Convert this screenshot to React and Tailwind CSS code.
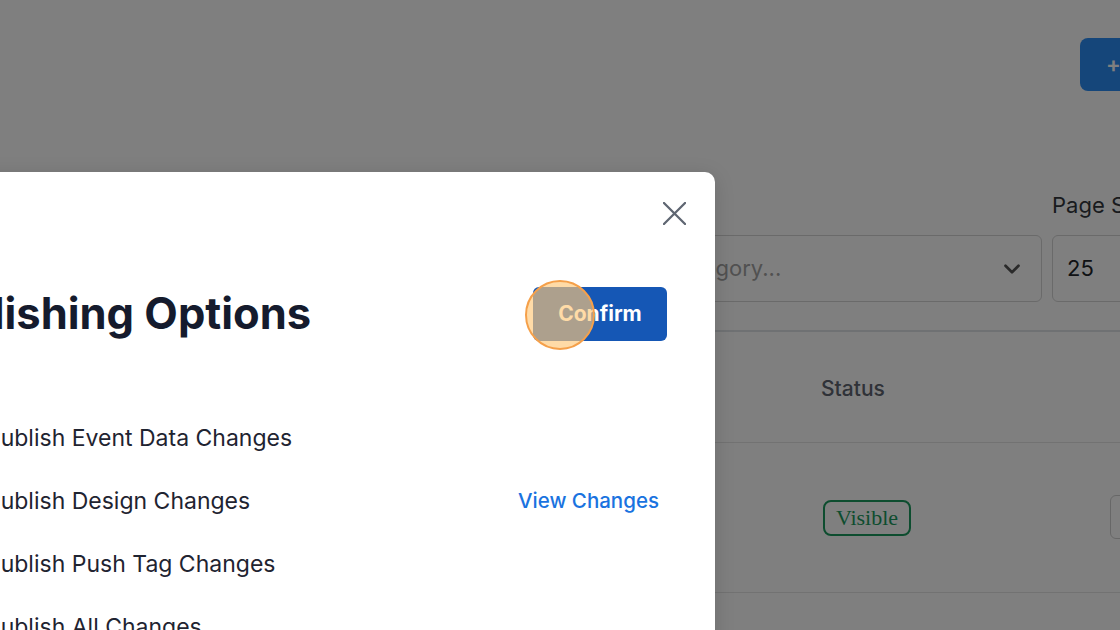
import { ChevronDown } from "lucide-react";

const ITEMS = [
  { label: "Publish Event Data Changes" },
  { label: "Publish Design Changes", link: "View Changes" },
  { label: "Publish Push Tag Changes" },
  { label: "Publish All Changes" },
];

function PageBehind() {
  return (
    <div className="flex flex-col">
      <div className="flex justify-end pt-[38px]">
        <button className="-mr-[120px] flex h-[53px] w-[160px] items-center gap-2 rounded-[8px] bg-[#2a8cf5] pl-[26px] text-[22px] font-semibold text-white">
          <span>+</span>
          <span>Add Event</span>
        </button>
      </div>

      <div className="mt-[99px] flex gap-[10px] pl-[560px]">
        <div className="flex w-[482px] shrink-0 flex-col">
          <div className="mb-[15px] text-[22px] leading-[30px] text-[#33373d]">Category</div>
          <div className="flex h-[67px] items-center justify-between rounded-[6px] border border-[#d4d4d4] pl-[20px] pr-[16px]">
            <span className="text-[22px] text-[#a3a3a3]">Select a category...</span>
            <ChevronDown className="h-[26px] w-[26px] text-[#555]" strokeWidth={2.5} />
          </div>
        </div>
        <div className="flex w-[200px] shrink-0 flex-col">
          <div className="mb-[15px] text-[22px] leading-[30px] text-[#33373d]">Page Size</div>
          <div className="flex h-[67px] items-center rounded-[6px] border border-[#d4d4d4] px-[14px]">
            <span className="text-[22px] text-[#212529]">25</span>
          </div>
        </div>
      </div>

      <div className="mt-[28px] w-[1400px] border-t-2 border-[#dee2e6]">
        <div className="grid h-[111px] grid-cols-[809px_289px_300px] items-center border-b border-[#e5e5e5] pt-[4px]">
          <div className="px-3 text-[21px] font-medium text-[#5f6570]">Event</div>
          <div className="px-3 text-[21px] font-medium text-[#5f6570]">Status</div>
          <div />
        </div>
        <div className="grid h-[150px] grid-cols-[809px_289px_300px] items-center border-b border-[#e5e5e5]">
          <div className="px-3 text-[21px]">Event</div>
          <div className="pl-[14px]">
            <span className="inline-flex h-[36px] w-[88px] items-center justify-center rounded-[8px] border-2 border-[#1b9a5e] font-['Liberation_Serif',serif] text-[22px] text-[#1b9a5e]">
              Visible
            </span>
          </div>
          <div className="pl-[12px] pt-[4px]">
            <span className="inline-flex h-[44px] w-[90px] items-center justify-center rounded-[6px] border border-[#cfcfcf]" />
          </div>
        </div>
      </div>
    </div>
  );
}

function PublishModal() {
  return (
    <div className="absolute left-[-300px] top-[172px] h-[600px] w-[1015px] rounded-[10px] bg-white shadow-[0_4px_20px_rgba(0,0,0,0.15)]">
      <button className="absolute right-[29px] top-[30px] h-[23px] w-[23px] text-[#5f6672]">
        <svg viewBox="0 0 24 24" className="h-full w-full" fill="none" stroke="currentColor" strokeWidth="2.4" strokeLinecap="round">
          <path d="M1 1 L23 23 M23 1 L1 23" />
        </svg>
      </button>

      <div className="mt-[115px] flex h-[54px] items-center justify-between pl-[210px] pr-[48px]">
        <h2 className="text-[43.5px] font-bold leading-none text-[#151b2d]">Publishing Options</h2>
        <div className="relative">
          <button className="h-[54px] w-[134px] rounded-[6px] bg-[#1557b5] text-[21px] font-bold text-white">Confirm</button>
          <span className="pointer-events-none absolute left-[-8px] top-[-7px] h-[70px] w-[70px] rounded-full border-2 border-[#f5a04a] bg-[rgba(255,200,120,0.65)]" />
        </div>
      </div>

      <div className="mt-[66px] flex flex-col pl-[226px] pr-[56px]">
        {ITEMS.map((it) => (
          <div key={it.label} className="flex h-[63px] items-center justify-between">
            <label className="flex items-center">
              <input type="checkbox" className="mr-[40px] h-[20px] w-[20px]" />
              <span className="text-[23px] text-[#1f2431]">{it.label}</span>
            </label>
            {it.link && <a className="text-[20.5px] font-medium text-[#1a73e0]">{it.link}</a>}
          </div>
        ))}
      </div>
    </div>
  );
}

export default function App() {
  return (
    <div className="relative h-[630px] w-[1120px] overflow-hidden bg-white font-['Inter',sans-serif]">
      <PageBehind />
      <div className="absolute inset-0 bg-black/50" />
      <PublishModal />
    </div>
  );
}
